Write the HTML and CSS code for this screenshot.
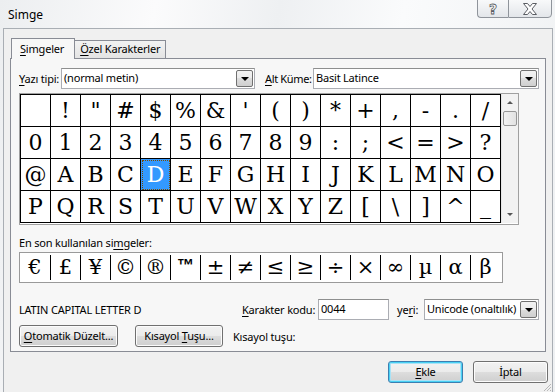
FILE: index.html
```html
<!DOCTYPE html>
<html lang="tr">
<head>
    <meta charset="UTF-8">
    <meta name="viewport" content="width=device-width, initial-scale=1.0">
    <title>Simge</title>
    <link rel="stylesheet" href="styles.css">
</head>
<body>

<div class="window">

    <!-- Title bar -->
    <div class="titlebar">
        <span class="title">Simge</span>
        <div class="caption-buttons">
            <span class="cap-btn help">?</span>
            <span class="cap-btn close">
                <svg width="16" height="12" viewBox="0 0 16 12">
                    <path d="M1.5 0.5 H5.5 L8 3.5 L10.5 0.5 H14.5 L10 6 L14.5 11.5 H10.5 L8 8.5 L5.5 11.5 H1.5 L6 6 Z" fill="#fff" stroke="#5a5d63" stroke-width="1"/>
                </svg>
            </span>
        </div>
    </div>

    <div class="client">

        <!-- Tabs -->
        <div class="tabs">
            <span class="tab active"><u>S</u>imgeler</span>
            <span class="tab"><u>Ö</u>zel Karakterler</span>
        </div>

        <div class="tab-panel">

            <div class="font-row">
                <span class="lbl font-lbl"><u>Y</u>azı tipi:</span>
                <div class="combo font-combo"><span class="combo-text">(normal metin)</span><span class="drop"></span></div>
                <span class="lbl subset-lbl"><u>A</u>lt Küme:</span>
                <div class="combo subset-combo"><span class="combo-text">Basit Latince</span><span class="drop"></span></div>
            </div>

            <!-- Symbol grid -->
            <div class="grid-box">
                <div class="sym-grid">
                    <span class="cell"> </span><span class="cell">!</span><span class="cell">"</span><span class="cell">#</span><span class="cell">$</span><span class="cell">%</span><span class="cell">&amp;</span><span class="cell">'</span><span class="cell">(</span><span class="cell">)</span><span class="cell">*</span><span class="cell">+</span><span class="cell">,</span><span class="cell">-</span><span class="cell">.</span><span class="cell">/</span>
                    <span class="cell">0</span><span class="cell">1</span><span class="cell">2</span><span class="cell">3</span><span class="cell">4</span><span class="cell">5</span><span class="cell">6</span><span class="cell">7</span><span class="cell">8</span><span class="cell">9</span><span class="cell">:</span><span class="cell">;</span><span class="cell">&lt;</span><span class="cell">=</span><span class="cell">&gt;</span><span class="cell">?</span>
                    <span class="cell">@</span><span class="cell">A</span><span class="cell">B</span><span class="cell">C</span><span class="cell selected">D</span><span class="cell">E</span><span class="cell">F</span><span class="cell">G</span><span class="cell">H</span><span class="cell">I</span><span class="cell">J</span><span class="cell">K</span><span class="cell">L</span><span class="cell">M</span><span class="cell">N</span><span class="cell">O</span>
                    <span class="cell">P</span><span class="cell">Q</span><span class="cell">R</span><span class="cell">S</span><span class="cell">T</span><span class="cell">U</span><span class="cell">V</span><span class="cell">W</span><span class="cell">X</span><span class="cell">Y</span><span class="cell">Z</span><span class="cell">[</span><span class="cell">\</span><span class="cell">]</span><span class="cell">^</span><span class="cell">_</span>
                </div>
                <div class="scrollbar">
                    <span class="sb-arrow"><span class="tri-up"></span></span>
                    <span class="sb-thumb"></span>
                    <span class="sb-track"></span>
                    <span class="sb-arrow"><span class="tri-down"></span></span>
                </div>
            </div>

            <div class="recent-label">En son kullanılan si<u>m</u>geler:</div>
            <div class="recent">
                <span class="rcell">€</span><span class="rcell">£</span><span class="rcell">¥</span><span class="rcell">©</span><span class="rcell">®</span><span class="rcell tm">™</span><span class="rcell">±</span><span class="rcell">≠</span><span class="rcell">≤</span><span class="rcell">≥</span><span class="rcell">÷</span><span class="rcell">×</span><span class="rcell">∞</span><span class="rcell">µ</span><span class="rcell">α</span><span class="rcell">β</span>
            </div>

            <div class="info-row">
                <span class="char-name">LATIN CAPITAL LETTER D</span>
                <span class="lbl code-lbl"><u>K</u>arakter kodu:</span>
                <div class="textbox">0044</div>
                <span class="lbl from-lbl">ye<u>r</u>i:</span>
                <div class="combo from-combo"><span class="combo-text">Unicode (onaltılık)</span><span class="drop"></span></div>
            </div>

            <div class="btn-row">
                <button class="btn autocorrect"><u>O</u>tomatik Düzelt...</button>
                <button class="btn shortcut">Kısayol <u>T</u>uşu...</button>
                <span class="lbl">Kısayol tuşu:</span>
            </div>

        </div>

        <div class="dialog-buttons">
            <button class="btn default"><u>E</u>kle</button>
            <button class="btn">İptal</button>
        </div>

        <svg class="grip" width="10" height="10" viewBox="0 0 10 10">
            <path d="M9 2 L2 9 M9 5 L5 9 M9 8 L8 9" stroke="#b8b8b8" stroke-width="1"/>
        </svg>
    </div>

</div>

</body>
</html>
```

FILE: styles.css
```css
* { box-sizing: border-box; }
body { margin: 0; font-family: "Noto Sans", sans-serif; font-size: 11px; letter-spacing: -0.2px; color: #000; background: #eef0f2; }
u { text-decoration: underline; text-underline-offset: 2px; }

.window { width: 555px; height: 392px; background: linear-gradient(100deg, #eceef0 0%, #fbfbfc 25%, #eef0f2 45%, #fafbfc 65%, #eef0f2 100%); overflow: hidden; }

/* title bar */
.titlebar { height: 28px; display: flex; justify-content: space-between; align-items: flex-start; }
.title { padding: 7px 0 0 8px; font-size: 12px; line-height: 16px; letter-spacing: 0; }
.caption-buttons { display: flex; margin-right: 3px; margin-top: -1px; }
.cap-btn { height: 19px; display: flex; align-items: center; justify-content: center; border: 1px solid #8f949b; background: linear-gradient(#f8f9fa, #e3e6ea); }
.help { width: 31px; border-right: none; border-radius: 0 0 0 4px; color: #fff; font-size: 14px; font-weight: bold; -webkit-text-stroke: 0.8px #5a5d63; font-family: "DejaVu Sans", sans-serif; letter-spacing: 0; }
.close { width: 44px; border-radius: 0 0 4px 0; }

/* client area */
.client { position: relative; margin-left: 3px; width: 550px; height: 364px; border: 1px solid #a9aeb4; border-bottom: none; background: #f0f0f0; padding-top: 9px; }

.tabs { display: flex; align-items: flex-end; padding-left: 7px; height: 20px; }
.tab { height: 18px; padding: 0 5px 0 5px; border: 1px solid #898c95; border-bottom: none; background: linear-gradient(#f2f2f2, #e4e4e4); line-height: 16px; }
.tab.active { height: 21px; margin-bottom: -1px; background: #f7f7f7; position: relative; z-index: 1; padding: 0 10px 0 8px; line-height: 20px; }
.tab + .tab { border-left: none; }

.tab-panel { margin-left: 6px; width: 536px; height: 294px; border: 1px solid #898c95; background: #f7f7f7; padding: 9px 0 0 8px; }

.lbl { white-space: nowrap; line-height: 21px; }

/* combos */
.font-row { display: flex; height: 21px; }
.font-lbl { width: 42px; }
.subset-lbl { width: 48px; margin-left: 10px; letter-spacing: -0.35px; }
.combo { display: flex; height: 21px; border: 1px solid #abadb3; border-top-color: #8e8f8f; background: #fff; }
.combo-text { flex: 1; padding-left: 2px; line-height: 18px; white-space: nowrap; overflow: hidden; }
.font-combo { width: 194px; }
.subset-combo { width: 226px; }
.drop { width: 17px; margin: 1px; border: 1px solid #707070; border-radius: 2px; background: linear-gradient(#f2f2f2 0%, #ebebeb 50%, #dddddd 50%, #cfcfcf 100%); display: flex; align-items: center; justify-content: center; }
.drop::after { content: ""; border-left: 4px solid transparent; border-right: 4px solid transparent; border-top: 4px solid #000; }

/* symbol grid */
.grid-box { display: flex; width: 500px; margin-top: 4px; border: 1px solid #a0a0a0; background: #fff; padding-bottom: 1px; }
.sym-grid { display: grid; grid-template-columns: repeat(16, 30px); border-left: 1px solid #000; border-top: 1px solid #000; width: 481px; }
.cell { height: 32px; border-right: 1px solid #000; border-bottom: 1px solid #000; font-family: "DejaVu Serif", serif; font-size: 22px; line-height: 31px; text-align: center; white-space: pre; letter-spacing: 0; }
.cell.selected { background: #3399ff; color: #fff; outline: 1px dotted #7a4b00; outline-offset: -2px; }

.scrollbar { width: 17px; display: flex; flex-direction: column; background: #f2f2f2; border-left: 1px solid #e6e6e6; }
.sb-arrow { height: 17px; display: flex; align-items: center; justify-content: center; }
.tri-up { border-left: 3px solid transparent; border-right: 3px solid transparent; border-bottom: 3px solid #555; }
.tri-down { border-left: 3px solid transparent; border-right: 3px solid transparent; border-top: 3px solid #555; }
.sb-thumb { height: 15px; margin: 0 1px; border: 1px solid #979797; border-radius: 2px; background: linear-gradient(90deg, #f3f3f3, #e2e2e2); }
.sb-track { flex: 1; }

/* recently used */
.recent-label { margin-top: 10px; line-height: 16px; }
.recent { display: flex; width: 484px; height: 31px; margin-top: 1px; border: 1px solid #9a9a9a; background: #fff; padding: 2px 0; }
.rcell { width: 30px; font-family: "DejaVu Serif", serif; font-size: 21px; line-height: 25px; text-align: center; letter-spacing: 0; }
.rcell + .rcell { border-left: 1px solid #000; }
.rcell.tm { font-family: "Liberation Sans", sans-serif; font-size: 17px; font-weight: bold; line-height: 22px; }

/* info row */
.info-row { display: flex; margin-top: 16px; height: 21px; }
.char-name { width: 223px; line-height: 21px; }
.code-lbl { width: 76px; }
.textbox { width: 71px; height: 21px; border: 1px solid #abadb3; border-top-color: #8e8f8f; background: #fff; padding-left: 2px; line-height: 18px; }
.from-lbl { width: 27px; margin-left: 8px; }
.from-combo { width: 115px; }

/* buttons */
.btn-row { display: flex; margin-top: 5px; align-items: center; }
.btn { height: 22px; padding: 0; font-family: "Noto Sans", sans-serif; font-size: 11px; letter-spacing: -0.2px; white-space: nowrap; color: #000; border: 1px solid #707070; border-radius: 3px; background: linear-gradient(#f2f2f2 0%, #ebebeb 50%, #dddddd 50%, #cfcfcf 100%); box-shadow: inset 0 0 0 1px #fcfcfc; line-height: 18px; }
.autocorrect { width: 99px; }
.shortcut { width: 88px; margin-left: 17px; margin-right: 10px; }

.dialog-buttons { display: flex; justify-content: flex-end; gap: 10px; margin-top: 9px; margin-right: 4px; }
.dialog-buttons .btn { width: 75px; }
.btn.default { border-color: #3c7fb1; box-shadow: inset 0 0 0 1px #48d1f4, inset 0 0 0 2px #a9e2f6; }

.grip { position: absolute; right: 0; bottom: 0; }
```
